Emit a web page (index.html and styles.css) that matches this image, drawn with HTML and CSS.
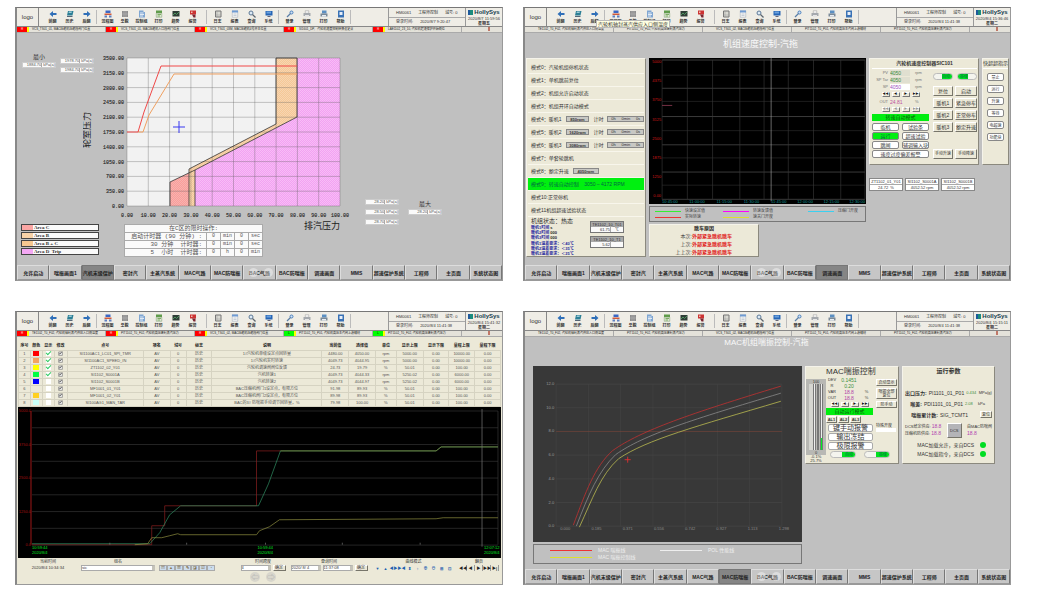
FILE: index.html
```
<!DOCTYPE html>
<html lang="zh-CN">
<head>
<meta charset="utf-8">
<title>HollySys 机组控制</title>
<link rel="stylesheet" href="styles.css">
</head>
<body>
<svg class="sprite" aria-hidden="true">
  <symbol id="i-left" viewBox="0 0 16 16"><path fill="#2f6fb8" d="M1 8l7-6v4h7v4H8v4z"/></symbol>
  <symbol id="i-right" viewBox="0 0 16 16"><path fill="#2f6fb8" d="M15 8L8 2v4H1v4h7v4z"/></symbol>
  <symbol id="i-disk" viewBox="0 0 16 16"><path fill="#2c7f96" d="M4 2h11l-2 9H2z"/><path fill="#9ccad6" d="M6 3h6l-1 3H5z"/><path fill="#567" d="M2 12h11v2H2z"/></symbol>
  <symbol id="i-flow" viewBox="0 0 16 16"><path fill="#3b67c4" d="M3 1h10v5H3z"/><path fill="#d05a3c" d="M1 7h14v3H1z"/><path fill="#5d7fc0" d="M1 11h5v4H1zM10 11h5v4h-5z"/></symbol>
  <symbol id="i-stop" viewBox="0 0 16 16"><path fill="#8e8e8e" d="M2 2h12v12H2z"/><path stroke="#bbb" d="M6 2v12M10 2v12M2 8h12"/></symbol>
  <symbol id="i-doc" viewBox="0 0 16 16"><path fill="#7fa6d2" d="M2 1h9v3h3v11H2z"/><path stroke="#fff" stroke-width="1.5" d="M4 6h7M4 9h8M4 12h6"/></symbol>
  <symbol id="i-sheet" viewBox="0 0 16 16"><path fill="#5f9c4a" d="M2 1h12v5H2z"/><path fill="#dfe8d6" stroke="#7a9a68" d="M2.500 6.500h11v8h-11z"/><path stroke="#7fae65" stroke-width="2" d="M5 9h7M5 12h5"/></symbol>
  <symbol id="i-trend" viewBox="0 0 16 16"><path fill="#2e3d36" d="M1 2h14v11H1z"/><path fill="none" stroke="#5ab06c" stroke-width="1.500" d="M2 10l4-4 3 3 5-5"/></symbol>
  <symbol id="i-alarm" viewBox="0 0 16 16"><path fill="#c33" d="M2 1h12v8H2z"/><path fill="#7a2630" d="M6 9h7v6H9z"/><path fill="#f0c0b0" d="M4 3h3v3H4z"/></symbol>
  <symbol id="i-log" viewBox="0 0 16 16"><path fill="#d9d9d2" stroke="#777" stroke-width="2" d="M3 2h11v12H3z"/><path stroke="#999" d="M3 10h11M6 2v12"/></symbol>
  <symbol id="i-report" viewBox="0 0 16 16"><path fill="#f4f4f4" stroke="#9aa6b4" d="M2.500 1.500h11v13h-11z"/><path fill="#6f9bd2" d="M2 1h12v4H2z"/><path stroke="#9ab" d="M5 8h6M5 11h6"/></symbol>
  <symbol id="i-find" viewBox="0 0 16 16"><circle cx="6" cy="6" r="4" fill="#dce9f4" stroke="#5c7896" stroke-width="2"/><path stroke="#5c6670" stroke-width="2.500" d="M9 9l6 6"/></symbol>
  <symbol id="i-screen" viewBox="0 0 16 16"><path fill="#2665b5" d="M1 2h14v9H1z"/><path fill="#6aa0dc" d="M3 3h9v4H3z"/><path fill="#667" d="M5 12h6v2H5z"/></symbol>
  <symbol id="i-key" viewBox="0 0 16 16"><circle cx="11" cy="5" r="3" fill="#cfe0f4" stroke="#4a80bd" stroke-width="2"/><path stroke="#5b7fa8" stroke-width="2.500" d="M9 7l-7 7"/></symbol>
  <symbol id="i-print" viewBox="0 0 16 16"><path fill="#f5f5f5" stroke="#999" d="M4.500 1.500h7v5h-7z"/><path fill="#a5a9ae" d="M1 6h14v6H1z"/><path fill="#e6e6e6" d="M4 10h8v4H4z"/></symbol>
  <symbol id="i-printer" viewBox="0 0 16 16"><path fill="#5b8fc2" d="M4 1h9v6H4z"/><path fill="#7a8a99" d="M1 7h14v6H1z"/><path fill="#e8eef4" d="M4 10h8v3H4z"/></symbol>
  <symbol id="i-help" viewBox="0 0 16 16"><path fill="#3a72b5" d="M2 1h12v14H2z"/><path fill="#e6eef8" d="M5 4h6v6H5z"/></symbol>
  <symbol id="i-edit" viewBox="0 0 16 16"><path fill="#eee" stroke="#777" stroke-width="2" d="M2 3h12v11H2z"/><path stroke="#444" stroke-width="2" d="M5 11l8-9M4 8h4"/></symbol>
</svg>

<main class="wall">
  <!-- 汽机末级保护 -->
  <section class="screen" data-screen="stage">
    <div class="stage">
      <div class="stage-min">
        <div class="min-one"><p class="cap">最小</p><p class="field">1884.70<i>kPa(a)</i></p></div>
        <div class="min-two"><p class="field">1978.70<i>kPa(a)</i></p><p class="field">1984.70<i>kPa(a)</i></p></div>
      </div>
      <svg class="stage-chart" viewBox="83 32 272 188" id="stageChart">
        <defs>
          <pattern id="hR" width="2" height="2" patternUnits="userSpaceOnUse"><path fill="#f6b4b0" d="M0 0h2v2H0z"/><path fill="#fb9c9a" d="M0 0h1v1H0zM1 1h1v1H1z"/></pattern>
          <pattern id="hO" width="2" height="2" patternUnits="userSpaceOnUse"><path fill="#f7d5b2" d="M0 0h2v2H0z"/><path fill="#f5c896" d="M0 0h1v1H0zM1 1h1v1H1z"/></pattern>
          <pattern id="hP" width="2" height="2" patternUnits="userSpaceOnUse"><path fill="#f8bcf6" d="M0 0h2v2H0z"/><path fill="#f2a2f2" d="M0 0h1v1H0zM1 1h1v1H1z"/></pattern>
        </defs>
        <path fill="#f2f2f2" d="M127 57h213v148H127z"/>
        <path fill="url(#hP)" d="M297 57H340V205H195V169L297 116z"/>
        <path fill="url(#hO)" d="M276 57H297V116L195 169V205H189V168L276 123z"/>
        <path fill="url(#hR)" d="M170 181L189 172V205H170z"/>
        <g id="stageGrid"></g>
        <path fill="none" stroke="#333" stroke-width=".8" d="M170 205V181L195 169V205M189 205V168L276 123V57H297V116L195 169"/>
        <path fill="none" stroke="#f0a060" d="M138 131H143L149 114L174 73H297"/>
        <path fill="none" stroke="#f04848" d="M127 131H138L144 111L161 65H297"/>
        <path stroke="#3838f0" d="M173 126h12M179 120v12"/>
        <text class="vtitle" transform="translate(90 147) rotate(-90)">轮室压力</text>
      </svg>
      <div class="stage-bottom">
        <ul class="areas">
          <li><b class="sw r"></b><span>Area C</span></li>
          <li><b class="sw o"></b><span>Area B</span></li>
          <li><b class="sw o2"></b><span>Area B + C</span></li>
          <li><b class="sw p"></b><span>Area D&nbsp; Trip</span></li>
        </ul>
        <table class="timer">
          <colgroup><col class="wide"><col><col><col><col></colgroup>
          <tr><th colspan="5">在C区的限时操作:</th></tr>
          <tr><td class="rt">启动计时器 (90 分钟) :</td><td>0</td><td>min</td><td>0</td><td>sec</td></tr>
          <tr><td class="rt">30 分钟 &nbsp;计时器:</td><td>0</td><td>min</td><td>0</td><td>sec</td></tr>
          <tr><td class="rt">5 &nbsp;小时 &nbsp;计时器:</td><td>0</td><td>h</td><td>0</td><td>min</td></tr>
        </table>
        <p class="xtitle">排汽压力</p>
      </div>
      <div class="stage-max">
        <div class="max-three"><p class="field">28.20<i>kPa(a)</i></p><p class="field">28.50<i>kPa(a)</i></p><p class="field">28.70<i>kPa(a)</i></p></div>
        <div class="max-one"><p class="cap">最大</p><p class="field">28.20<i>kPa(a)</i></p></div>
      </div>
    </div>
  </section>

  <!-- 机组速度控制 -->
  <section class="screen" data-screen="speed">
    <div class="speed">
      <h1 class="title">机组速度控制-汽拖</h1>
      <div class="speed-grid">
        <div class="modes">
          <ol class="mode-list" id="modeList"></ol>
          <div class="status">
            <div class="status-l">
              <p class="st">机组状态：热态</p>
              <p>暖机1时间 <em>s</em></p><p>暖机2时间 <em>000</em></p><p>暖机3时间 <em>000</em></p>
              <p class="up">暖机1温差要求：＜40℃</p><p>暖机2温差要求：＜35℃</p><p>暖机3温差要求：＜25℃</p>
            </div>
            <div class="status-r">
              <div class="tag"><b>TE1102_10_T01</b><span>61.75</span><span>℃</span></div>
              <div class="tag"><b>TE1102_10_T1</b><span>5.62</span><span></span></div>
            </div>
          </div>
        </div>
        <div class="speed-mid">
          <svg class="speed-chart" viewBox="649 59 215 145" id="speedChart"><path d="M649 59h215v145H649z"/></svg>
          <ul class="legend three">
            <li><b class="g"></b>快速设定值</li><li><b class="m"></b>转速反馈值</li><li><b class="c"></b>压缩门开度</li>
            <li><b class="rd"></b>实际转速</li><li><b class="y"></b>速关门开度</li>
          </ul>
          <table class="trip">
            <tr><th></th><th>跳车原因</th></tr>
            <tr><td>本次:</td><td class="hot">外部紧急跳机跳车</td></tr>
            <tr><td>上次:</td><td class="hot">外部紧急跳机跳车</td></tr>
            <tr><td>上上次:</td><td class="hot">外部紧急跳机跳车</td></tr>
          </table>
        </div>
        <div class="speed-right">
          <div class="speed-panels">
            <div class="sic">
              <h2>汽轮机速度控制器SIC101</h2>
              <div class="sic-l">
                <label>PV<input value="4050" readonly><span>rpm</span></label>
                <label>SP Tar<input value="4050" readonly><span>rpm</span></label>
                <label>SP<input class="w" value="4050"><span>rpm</span></label>
                <div class="steps"><button>◀◀</button><button>◀</button><button>▶</button><button>▶▶</button></div>
                <label>OUT<input class="pk" value="24.81" readonly><span>%</span></label>
                <div class="steps dim"><button>◀◀</button><button>◀</button><button>▶</button><button>▶▶</button></div>
                <p class="mode-bar">转速自动模式</p>
                <div class="pills"><button>临机</button><button>试验条</button><button class="on">运行</button><button>超速试验</button><button>跳闸</button><button>辅调输入块</button><button class="wide">速度过度偏差报警</button></div>
              </div>
              <div class="sic-r">
                <div class="toggles"><button class="tg">自动</button><button class="tg rev">串级</button></div>
                <div class="cmds"><button>复位</button><button>启动</button><button>暖机1</button><button>紧急停车</button><button>暖机2</button><button>正常停车</button><button>暖机3</button><button>额定升速</button></div>
                <div class="cmds"><button>手动升速</button><button>手动降速</button></div>
              </div>
            </div>
            <div class="picker"><h2>快超超指示</h2><button>禁止</button><button>运行</button><button>升速</button><button>等待</button><button>电超速</button><button>功能块</button></div>
          </div>
          <div class="tags">
            <div><b>ZT1102_01_Y01</b><span>24.72 &nbsp;%</span></div>
            <div><b>SI1102_S0001A</b><span>4052.52 rpm</span></div>
            <div><b>SI1102_S0001B</b><span>4052.52 rpm</span></div>
          </div>
        </div>
      </div>
    </div>
  </section>

  <!-- 趋势 -->
  <section class="screen" data-screen="trend">
    <div class="trend">
      <table class="points"><thead><tr id="pointHead"></tr></thead><tbody id="pointRows"></tbody></table>
      <svg class="trend-chart" viewBox="18 410 484 152" id="trendChart">
        <path d="M18 410h484v152H18z"/>
        <g id="trendGrid"></g>
        <path stroke="#a01818" d="M31 414V548"/>
        <g fill="none" stroke-width=".7">
          <path stroke="#8c2020" d="M32 548H152V529H165V509H257V454H281"/>
          <path stroke="#2f8f63" d="M32 547H150L160 536L170 518L181 509H259L269 487L281 454H437L442 450H499"/>
          <path stroke="#8f8f40" d="M135 548L148 547L152 541L162 541L170 539L178 537L181 538H257L260 534L270 530L280 523L437 522L444 521H499M281 454H437L442 450H499"/>
        </g>
        <path stroke="#777" stroke-width=".7" d="M483 412V550M110 546v2M187 546v2M266 546v2M343 546v2M421 546v2"/>
      </svg>
      <div class="trend-bar">
        <div class="tb"><span>当前时间</span><time>2020/8/4 10:34:34</time></div>
        <div class="tb"><label for="grp">组名</label><select id="grp"><option>sic</option></select></div>
        <div class="tb ic"><div class="mini" id="miniA"></div></div>
        <div class="tb"><label for="span">时间跨度</label><div class="row"><select id="span"><option>4</option></select><button>确定</button></div><div class="row rounds"><button>⇦</button><button>⇨</button></div></div>
        <div class="tb"><label for="qd">查询时间</label><div class="row"><select id="qd"><option>2020/ 8/ 4</option></select><select aria-label="时刻"><option>11:37:08</option></select><button>确定</button></div></div>
        <div class="tb"><span>曲线模式</span><div class="mini" id="miniB"></div></div>
        <div class="tb"><span>翻页</span><div class="mini pg"><button>◀◀</button><button>◀</button><button>▶</button><button>▶▶</button><button>▶|</button></div></div>
      </div>
    </div>
  </section>

  <!-- MAC 喘振控制 -->
  <section class="screen" data-screen="surge">
    <div class="surge">
      <h1 class="title">MAC机组喘振控制-汽拖</h1>
      <div class="surge-grid">
        <div class="surge-mid">
          <svg class="surge-chart" viewBox="533 366 267 175" id="surgeChart">
            <path fill="#383838" d="M533 366h267v175H533z"/>
            <g id="surgeGrid"></g>
            <g fill="none" stroke-width=".8">
              <path stroke="#c03030" d="M573 524C585 492 594 466 612 450C640 430 690 413 779 386"/>
              <path stroke="#888" d="M576 525C588 494 598 470 615 454C643 434 692 419 779 393"/>
              <path stroke="#b8b850" d="M579 526C592 498 600 474 618 458C646 439 695 426 779 401"/>
            </g>
            <path stroke="#f03030" stroke-width=".8" d="M624 459h6M627 456v6"/>
          </svg>
          <ul class="legend two">
            <li><b class="rd"></b>MAC 喘振线</li><li><b class="w"></b>POL 性能线</li>
            <li><b class="y"></b>MAC 喘振控制线</li>
          </ul>
        </div>
        <div class="mac">
          <div class="gauge"><span>100</span><div class="bars"><i></i><i class="f1"></i><i class="f2"></i></div><span>0</span><span>-0.1%<br>25.7%</span></div>
          <div class="mac-c">
            <h2>MAC喘振控制</h2>
            <dl class="vals"><dt>DEV</dt><dd class="gr">0.1451</dd><dd></dd><dt>R</dt><dd class="gr">0.20</dd><dd></dd><dt>VAR</dt><dd>18.8</dd><dd class="u">%</dd><dt>OUT</dt><dd>18.8</dd><dd class="u">%</dd></dl>
            <div class="steps"><button>◀◀</button><button>◀</button><button>▶</button><button>▶▶</button></div>
            <p class="mode-bar">自动运行模式</p>
            <div class="al"><button>AL1</button><button>AL2</button><button>AL3</button></div>
            <div class="alarms-btn"><button>键手动报警</button><button>输出冻结</button><button>极限报警</button></div>
            <div class="toggles"><button class="tg">自动</button><button class="tg">串级</button></div>
          </div>
          <div class="mac-r"><button>启动显示</button><button class="tall">喘振全部<br>复位</button><button>防手动</button><label>特殊开度<input value=""></label></div>
        </div>
        <div class="params">
          <h2>运行参数</h2>
          <p><b>出口压力:</b> PI1101_01_P01<em>0.434</em><span>MPa(g)</span></p>
          <p><b>喉差:</b> PDI1101_01_P01<em>2.08</em><span>kPa</span></p>
          <p><b>喘振累计数:</b> SIG_TCMT1<button>复位</button></p>
          <div class="dcs"><div><p>DCS给定供应: <em>18.8</em></p><p>压缩机防供应: <em>18.8</em></p></div><button>DCS</button><div><p>由MAC防喘阀</p><p><em>18.8</em></p></div></div>
          <p class="lamp">MAC加载允许，来自DCS<i></i></p>
          <p class="lamp">MAC加载指令，来自DCS<i></i></p>
        </div>
      </div>
    </div>
  </section>
</main>
<script src="script.js"></script>
</body>
</html>
```
FILE: styles.css
```
* { box-sizing: border-box; margin: 0; padding: 0; }
body { background: #fff; color: #333; font: 5px/6px "Liberation Sans", "Noto Sans CJK SC", sans-serif; }
button, input, select { font: inherit; color: inherit; border: 0; background: none; min-width: 0; white-space: nowrap; }
select { appearance: none; }
ul, ol { list-style: none; }
i, em { font-style: normal; }
table { border-collapse: collapse; }
svg { display: block; }
.sprite { position: absolute; width: 0; height: 0; }

.wall { display: grid; grid-template-columns: 1fr 1fr; align-items: start; gap: 30px 20px; padding: 7px 27px 0 15px; }
.screen { display: flex; flex-direction: column; min-height: 274px; background: #c0c0c0; border: 1px solid #999; border-top-color: #777; border-left: 2px solid #888; min-width: 0; }
.screen > :nth-child(3) { flex: 1 0 auto; }

/* toolbar */
.toolbar { position: relative; display: flex; height: 18px; background: #efede6; }
.logo { width: 22px; border-right: 1px solid #888; display: grid; place-items: center; font-size: 6px; margin-right: 5px; }
.tools { display: flex; border-right: 1px solid #bbb; margin: 2px 2px 2px 0; padding-right: 1px; }
.tools.gap { padding-right: 5px; }
.tools button { width: 17px; display: flex; flex-direction: column; align-items: center; font-size: 4px; line-height: 5px; font-weight: bold; }
.tools svg { width: 8px; height: 8px; margin-bottom: 1px; }
.info { margin-left: auto; width: 78px; border-left: 1px solid #999; border-right: 1px solid #999; display: grid; grid-template-rows: 1fr 1fr; font-size: 4px; }
.info p { display: flex; align-items: center; gap: 7px; padding-left: 7px; white-space: nowrap; }
.info p + p { border-top: 1px solid #aaa; }
.brand { width: 36px; text-align: center; font-size: 4px; line-height: 5px; white-space: nowrap; padding-top: 1px; }
.brand b { display: flex; align-items: center; justify-content: center; gap: 1px; font-size: 6px; line-height: 7px; color: #123c4c; }
.brand b i { width: 5px; height: 5px; background: #1b8c7e; border-left: 2px solid #1f5a9a; }
.brand time, .brand strong { display: block; }
.tip { position: absolute; left: 71px; top: 12px; background: #ffffe1; border: 1px solid #bbb; padding: 0 1px; line-height: 6px; font-size: 5px; }

.ticker { display: grid; grid-template-columns: repeat(5, 89px) 1fr; height: 7px; background: #e4e2da; border-top: 1px solid #888; border-bottom: 1px solid #aaa; font-size: 3px; line-height: 5px; }
.ticker div { display: flex; gap: 3px; white-space: nowrap; border-right: 1px solid #aaa; color: #222; }
.ticker b { flex: none; width: 12px; border-right: 2px solid #ff0; background: #f00; color: #ffb0b0; text-align: center; }
.ticker b.gn { background: #0f0; color: #080; }
.ticker .plain { padding-left: 13px; }
.ticker .bell { border: 0; justify-content: center; }
.bell::after { content: ""; width: 2px; height: 4px; margin-left: 14px; background: #c07868; }

.nav { display: grid; grid-template-columns: repeat(15, 1fr); height: 15px; }
.nav button { position: relative; background: #c6c6c6; border: 1px solid; border-color: #ddd #777 #999 #ddd; font-weight: bold; color: #222; }
.nav button.cur { background: #858585; border-color: #777; }
.nav .rings::before, .nav .rings::after { content: ""; position: absolute; top: 2px; left: 5px; width: 9px; height: 9px; border-radius: 50%; background: #fff6; }
.nav .rings::after { left: 20px; }

.title { font-size: 9px; line-height: 10px; font-weight: normal; color: #fafafa; text-align: center; padding-right: 14px; }

/* final stage protection */
.stage { display: grid; grid-template-columns: 66px 272px 1fr; grid-template-rows: auto auto; align-content: start; }
.stage-min { display: flex; gap: 4px; padding: 20px 0 0 5px; }
.min-one, .min-two { width: 34px; flex: none; }
.min-two { padding-top: 5px; display: flex; flex-direction: column; gap: 3px; position: relative; z-index: 1; }
.cap { font-size: 6px; line-height: 9px; text-align: center; }
.field { display: flex; justify-content: flex-end; background: #fafafa; border: 1px solid #ccc; font-size: 4px; line-height: 4px; color: #555; white-space: nowrap; }
.field i { border-left: 1px solid #aaa; padding-left: 1px; }
.stage-chart { width: 100%; }
.stage-chart text { font: 5px "Liberation Mono", monospace; fill: #222; stroke: #222; stroke-width: .1; }
.stage-chart .vtitle { font: 9px "Noto Sans CJK SC", sans-serif; stroke: none; }
.stage-bottom { grid-column: 1 / 3; grid-row: 2; display: flex; align-items: flex-start; padding: 3px 0 0 4px; }
.areas { width: 78px; display: grid; gap: 1px; flex: none; }
.areas li { display: flex; height: 7px; background: #fafafa; border: 1px solid #444; gap: 1px; font-size: 5px; line-height: 5px; font-weight: bold; font-family: "Liberation Serif", serif; }
.sw { width: 11px; }
.sw.r { background: #fba6a4; } .sw.o { background: #f7d2a8; } .sw.o2 { background: #f6c890; } .sw.p { background: #f4a8f4; }
.timer { width: 139px; flex: none; margin-left: 25px; background: #fafafa; font: 6px/7px "Liberation Mono", "Noto Sans CJK SC", monospace; color: #555; table-layout: fixed; }
.timer .wide { width: 82px; }
.timer th, .timer td { border: 1px solid #aaa; font-weight: normal; text-align: center; height: 8px; white-space: nowrap; }
.timer td { font-size: 5px; }
.timer .rt { text-align: right; font-size: 6px; padding-right: 4px; }
.xtitle { font-size: 9px; line-height: 9px; margin: -2px 0 0 41px; white-space: nowrap; color: #222; }
.stage-max { grid-column: 3; grid-row: 1 / 3; display: flex; align-items: flex-start; gap: 9px; padding: 166px 0 0 10px; }
.stage-max > div { width: 34px; display: flex; flex-direction: column; }
.max-three { gap: 4px; }
.max-one .cap { line-height: 10px; }

/* shared control parts */
.modes, .sic, .picker, .mac, .params, .trip { background: #ece9d8; border: 1px solid; border-color: #f5f3ea #8b897e #8b897e #f5f3ea; }
.steps { display: flex; gap: 2px; justify-content: center; }
.steps button { width: 8px; height: 5px; font-size: 3px; line-height: 3px; border: 1px solid; border-color: #fff #777 #777 #fff; color: #111; }
.steps.dim button { color: #999; }
.mode-bar { background: #00ee10; color: #086008; text-align: center; line-height: 7px; }
.toggles { display: flex; justify-content: space-between; gap: 4px; }
.tg { width: 20px; height: 7px; border-radius: 4px; background: linear-gradient(90deg, #f4f4ee 45%, #00e020 45%); color: #064; font-size: 4px; line-height: 5px; text-align: right; border: 1px solid #bbb; padding-right: 2px; }
.tg.rev { background: linear-gradient(270deg, #f4f4ee 45%, #00e020 45%); text-align: left; padding-left: 2px; }

.legend { display: grid; border: 1px solid #777; font-size: 4px; line-height: 6px; color: #444; margin-top: 2px; }
.legend li { display: flex; align-items: center; gap: 4px; white-space: nowrap; }
.legend b { width: 26px; height: 1px; }
.legend .g { background: #3e3; } .legend .m { background: #f0f; } .legend .c { background: #3bd0f0; } .legend .rd { background: #e33; } .legend .y { background: #dde030; } .legend .w { background: #eee; }
.legend.three { grid-template-columns: 68px 85px 1fr; padding: 1px 5px; }
.legend.two { grid-template-columns: 110px 1fr; padding: 2px 16px; }
.legend.two b { width: 42px; }
.legend.two li { color: #eee; line-height: 7px; gap: 6px; font-size: 5px; }

/* speed control */
.speed { padding-top: 6px; }
.speed-grid { display: grid; align-items: start; grid-template-columns: 120px 217px 1fr; gap: 0 3px; padding: 9px 3px 6px 1px; }
.modes { padding: 2px 1px 0; }
.mode-list li { display: flex; align-items: center; gap: 4px; height: 13px; padding-left: 3px; border-bottom: 1px solid #f8f6ec; white-space: nowrap; }
.mode-list .cur { background: #00f010; color: #064; }
.mode-list input { width: 26px; height: 6px; background: #c8c8c4; border: 1px solid #888; text-align: center; font-weight: bold; font-size: 4px; line-height: 4px; }
.mode-list .tm { display: flex; width: 40px; background: #c8c8c4; border: 1px solid #888; font-size: 4px; line-height: 4px; justify-content: space-around; }
.status { display: flex; justify-content: space-between; padding: 0 20px 0 3px; }
.status-l { font-size: 4px; line-height: 5px; font-weight: bold; color: #2a2aa0; white-space: nowrap; }
.status-l em { color: #222; }
.status-l .st { font-size: 6px; line-height: 8px; color: #333; font-weight: normal; }
.status-l .up { margin-top: 1px; }
.status-r { width: 34px; display: flex; flex-direction: column; gap: 3px; padding-top: 4px; }
.tag { display: grid; grid-template-columns: 19px 1fr; border: 1px solid #777; background: #fafafa; font-size: 4px; line-height: 5px; text-align: right; }
.tag b { grid-column: 1 / 3; background: #a8a8a8; text-align: center; font-weight: normal; white-space: nowrap; }
.tag span + span { border-left: 1px solid #aaa; text-align: center; }
.speed-mid, .speed-right { min-width: 0; }
.speed-chart, .surge-chart, .trend-chart { width: 100%; }
.speed-chart text, .trend-chart text, .surge-chart text { font: 4px "Liberation Sans", sans-serif; }
.trip { width: 110px; margin-top: 2px; line-height: 7px; color: #444; border-collapse: separate; border-spacing: 0; }
.trip th { text-align: left; padding-left: 2px; color: #222; }
.trip td { text-align: right; height: 8px; }
.trip .hot { color: #e02020; font-weight: bold; text-align: left; width: 66px; }
.speed-panels { display: flex; gap: 3px; height: 107px; }
.sic { flex: 1; display: grid; grid-template-columns: 57px 1fr; grid-template-rows: auto 1fr; column-gap: 4px; padding: 0 1px 1px 2px; }
.sic h2 { grid-column: 1 / 3; }
.sic h2, .picker h2 { font-size: 5px; line-height: 9px; text-align: center; white-space: nowrap; border-bottom: 1px solid #fff; }
.sic-l { display: flex; flex-direction: column; gap: 1px; padding-top: 1px; }
.sic-l label { display: grid; grid-template-columns: 16px 20px 1fr; gap: 2px; text-align: right; font-size: 4px; line-height: 6px; color: #777; white-space: nowrap; }
.sic-l label span { text-align: left; padding-left: 3px; }
.sic-l input { width: 20px; height: 6px; color: #3a8a3a; background: #e0dfd0; font-size: 5px; }
.sic-l input.w { background: #fff; color: #a050c0; }
.sic-l input.pk { color: #c050a0; background: none; }
.sic-l .steps { padding: 1px 0; }
.pills { display: grid; grid-template-columns: 1fr 1fr; gap: 1px 3px; padding-top: 1px; }
.pills button, .picker button, .alarms-btn button { background: #fff; border: 1px solid #888; border-radius: 2px; line-height: 5px; height: 8px; }
.pills .on { background: #00ee10; color: #064; }
.pills .wide { grid-column: 1 / 3; }
.sic-r { display: flex; flex-direction: column; gap: 6px; padding-top: 4px; }
.cmds { display: grid; grid-template-columns: 20px 1fr; gap: 2px; }
.cmds button, .mac-r button, .al button, .params button { border: 1px solid; border-color: #fff #77756a #77756a #fff; height: 10px; }
.cmds + .cmds { margin-top: auto; padding-bottom: 4px; }
.cmds + .cmds button { font-size: 4px; }
.picker { width: 28px; display: flex; flex-direction: column; gap: 4px; padding: 0 4px; }
.picker h2 { font-size: 5px; font-weight: normal; margin: 0 -4px; }
.picker button { font-size: 4px; }
.tags { display: flex; gap: 2px; margin-top: 13px; }
.tags div { width: 34px; background: #fff; border: 1px solid #888; font-size: 4px; line-height: 5px; text-align: center; white-space: nowrap; }
.tags b { display: block; font-weight: normal; border-bottom: 1px solid #aaa; }

/* trend */
.trend { display: flex; flex-direction: column; background: #ece9d8; padding: 4px 1px 0 1px; }
.points { width: 100%; table-layout: fixed; font-size: 4px; line-height: 5px; text-align: center; color: #555; }
.points th { height: 9px; color: #222; white-space: nowrap; }
.points td { height: 7px; border: 1px solid #d6d3c2; white-space: nowrap; }
.points .chip { display: block; width: 6px; height: 5px; margin: auto; }
.points input { appearance: none; display: block; width: 5px; height: 5px; margin: auto; background: #fff; }
.points input:checked::after { content: ""; display: block; width: 4px; height: 2px; border: solid #3c6; border-width: 0 0 1px 1px; transform: rotate(-45deg); }
.points svg { width: 5px; height: 5px; margin: auto; }
.trend-bar { flex: 1; display: grid; grid-template-columns: 60px 80px 80px 50px 82px 87px 1fr; font-size: 4px; line-height: 5px; padding-top: 1px; }
.tb { display: flex; flex-direction: column; align-items: center; gap: 1px; white-space: nowrap; min-width: 0; }
.tb.ic { padding: 6px 22px 0 0; }
.tb select { height: 6px; width: 30px; background: #fff; border: 1px solid #aaa; border-right: 3px solid #c4c2b8; line-height: 4px; }
.tb > select { width: 74px; }
.row { display: flex; gap: 2px; }
.row button { width: 13px; height: 6px; border: 1px solid; border-color: #fff #77756a #77756a #fff; line-height: 4px; }
.row.rounds { gap: 6px; }
.row.rounds button { width: 10px; height: 10px; border-radius: 50%; background: #d8d6cc; color: #aaa; border: 0; font-size: 8px; line-height: 9px; }
.mini { display: flex; }
.mini button { width: 8px; height: 6px; font-size: 4px; line-height: 5px; color: #2060b0; font-weight: bold; }
.mini.pg button { color: #222; border-right: 1px solid #999; }
.mini button.s { border: 1px solid #aaa; background: #cde; color: #875; line-height: 4px; }

/* surge */
.surge { padding-top: 1px; }
.surge .title { font-size: 8px; padding-right: 2px; }
.surge-grid { display: grid; grid-template-columns: 269px 94px 93px; align-items: start; gap: 0 3px; padding: 18px 0 0 8px; }
.surge-mid { min-width: 0; }
.mac { display: grid; grid-template-columns: 20px 47px 1fr; height: 98px; }
.gauge { background: #b8b8b4; margin-top: 12px; text-align: center; font-size: 4px; line-height: 5px; display: flex; flex-direction: column; }
.gauge span:last-child { background: #ece9d8; line-height: 4px; }
.bars { flex: 1; display: flex; gap: 1px; justify-content: flex-end; padding-right: 3px; border-left: 4px solid #d5d5d0; margin-left: 3px; }
.bars i { width: 3px; background: #eee; border: 1px solid #777; border-width: 0 1px; }
.bars .f1 { background: linear-gradient(#eee 65%, #0e2 65%); } .bars .f2 { background: linear-gradient(#eee 82%, #0e2 82%); }
.mac-c { display: flex; flex-direction: column; gap: 1px; }
.mac-c h2 { font-size: 8px; line-height: 9px; font-weight: normal; white-space: nowrap; }
.vals { display: grid; grid-template-columns: 12px 22px 1fr; line-height: 6px; text-align: center; font-size: 5px; }
.vals dt { font-size: 4px; }
.vals dd { color: #b040a8; } .vals .gr { color: #3c9040; } .vals .u { color: #444; font-size: 4px; }
.al { display: flex; gap: 1px; }
.al button { width: 11px; height: 7px; line-height: 5px; font-weight: bold; font-size: 4px; }
.alarms-btn { display: grid; gap: 1px; padding-left: 2px; font-size: 7px; }
.alarms-btn button { height: 8px; line-height: 6px; border-color: #aaa; }
.mac-c .toggles { width: 64px; padding-left: 4px; }
.mac-c .tg { width: 26px; }
.mac-r { display: flex; flex-direction: column; gap: 2px; padding: 12px 1px 0 3px; font-size: 4px; line-height: 5px; }
.mac-r button { height: 7px; line-height: 5px; }
.mac-r .tall { height: 11px; line-height: 4px; }
.mac-r label { padding-top: 13px; }
.mac-r input { display: block; width: 20px; height: 4px; background: #fff; }
.params { height: 98px; display: flex; flex-direction: column; padding: 0 2px; white-space: nowrap; }
.params h2 { font-size: 6px; line-height: 8px; text-align: center; margin-bottom: 12px; }
.params > p { display: flex; justify-content: flex-end; gap: 2px; align-items: center; height: 11px; font-size: 5px; }
.params > p span { width: 14px; font-size: 4px; }
.params em { color: #b040b0; }
.params > p em { color: #3c9040; font-size: 4px; width: 11px; }
.params button { height: 7px; width: 12px; line-height: 5px; font-size: 4px; margin-left: 10px; }
.dcs { display: flex; align-items: center; justify-content: space-between; font-size: 4px; height: 20px; }
.dcs em { font-size: 5px; }
.dcs button { width: 15px; height: 15px; background: #b4b4b8; margin: 0; }
.params .lamp { height: 9px; padding-right: 6px; gap: 6px; }
.lamp i { width: 6px; height: 6px; border-radius: 50%; background: #0d2; }
```
FILE: script.js
```
const NS = 'http://www.w3.org/2000/svg';
const el = (html) => { const t = document.createElement('template'); t.innerHTML = html.trim(); return t.content.firstElementChild; };

const toolGroups = [
  [['left', '前翻'], ['disk', '历史'], ['right', '后翻']],
  [['flow', '流程图'], ['stop', '总貌'], ['doc', '控制组'], ['sheet', '打印'], ['trend', '趋势'], ['alarm', '报警']],
  [['log', '日志'], ['report', '报表'], ['find', '查询'], ['screen', '系统']],
  [['key', '登录'], ['print', '管理'], ['printer', '打印'], ['help', '帮助']]
];
const navItems = ['允许启动', '喘振画面1', '汽机末级保护', '密封汽', '主蒸汽系统', 'MAC气路', 'MAC防喘振', 'BAC气路', 'BAC防喘振', '调速画面', 'MMS', '超速保护系统', '工程师', '主页面', '系统状态图'];

const T = {
  inlet: 'TE1102_T0_F02, 汽轮机轴封蒸汽供应入口侧温度',
  supply: 'PIT1102_T0_F02, 汽轮机高压密封蒸汽压力',
  seal: 'VCS_TS01_02, MAC压缩机压缩段阀门位置',
  reg: 'PIT1102_T0_P01, 汽轮机高压主汽阀上游辅材'
};
const screens = {
  stage: { current: 2, time: '2020/8/7 11:59:56', login: '2020/8/7 9:20:47', day: '星期五', red: 5,
    ticker: ['VCS_TS01_01, MAC压缩机压缩段阀门位置', 'VCS_TS01_01, MAC压缩机入口段阀门位置', 'VCS_TS01_03M, MAC压缩机4号开主位置', 'SI1601_DP, &nbsp; 汽轮机速度控制转换设定点', 'LAE1102_23_10, 汽轮机超速保护开始倒位'] },
  speed: { current: 9, time: '2020/8/4 15:36:46', login: '2020/8/4 11:41:38', day: '星期二', tip: '汽轮机轴封蒸汽供应入口侧温度',
    ticker: [T.inlet, T.supply, T.seal, T.reg, T.supply] },
  trend: { time: '2020/8/4 15:41:32', login: '2020/8/4 11:41:38', day: '星期二', red: 3,
    ticker: [T.inlet, T.supply, T.seal, T.reg, T.supply] },
  surge: { current: 6, time: '2020/8/4 15:15:11', login: '2020/8/4 11:41:38', day: '星期二',
    ticker: [T.inlet, T.supply, T.seal, T.reg, T.supply] }
};

document.querySelectorAll('.screen').forEach((node) => {
  const s = screens[node.dataset.screen];
  const tools = toolGroups.map((g, i) => `<div class="tools ${i === 1 ? 'gap' : ''}">` +
    g.map(([icon, label]) => `<button><svg><use href="#i-${icon}"/></svg>${label}</button>`).join('') + '</div>').join('');
  const ticker = s.ticker.map((text, i) => s.red
    ? `<div><b class="${i < s.red ? '' : 'gn'}">${i < s.red ? 'H' : 'L'}</b>${text}</div>`
    : `<div class="plain">${text}</div>`).join('');
  node.prepend(
    el(`<header class="toolbar"><div class="logo">logo</div>${tools}
      <div class="info"><p><span>HM0061</span><span>工程师控制</span><span>域号: 0</span></p><p><span>登录时间:</span><span>${s.login}</span></p></div>
      <div class="brand"><b><i></i>HollySys</b><time>${s.time}</time><strong>${s.day}</strong></div>
      ${s.tip ? `<div class="tip">${s.tip}</div>` : ''}</header>`),
    el(`<div class="ticker">${ticker}<div class="bell"></div></div>`)
  );
  if (node.dataset.screen !== 'trend') {
    node.append(el('<nav class="nav">' + navItems.map((n, i) =>
      `<button class="${i === s.current ? 'cur' : ''} ${i === 7 ? 'rings' : ''}">${n}</button>`).join('') + '</nav>'));
  }
});

function line(g, d, stroke, width = 0.6) {
  const p = document.createElementNS(NS, 'path');
  p.setAttribute('d', d); p.setAttribute('stroke', stroke); p.setAttribute('stroke-width', width); p.setAttribute('fill', 'none');
  g.append(p);
}
function label(g, x, y, text, fill, anchor = 'start') {
  const t = document.createElementNS(NS, 'text');
  t.setAttribute('x', x); t.setAttribute('y', y); t.setAttribute('text-anchor', anchor);
  if (fill) t.style.fill = fill;
  t.textContent = text; g.append(t);
}
const byId = (id) => document.getElementById(id);

const sg = byId('stageGrid');
for (let i = 0; i <= 10; i++) {
  const x = 127 + i * 21.3, y = 205 - i * 14.8;
  line(sg, `M${x} 57V205`, '#5558');
  line(sg, `M127 ${y}H340`, '#5558');
  label(sg, 124, y + 2, (i * 350).toFixed(2), null, 'end');
  label(sg, x, 216, (i * 10).toFixed(2), null, 'middle');
}

const modes = ['模式0：汽轮机组停机状态', '模式1：单机跳前复位', '模式2：机组允许启动状态', '模式3：机组开环自动模式', '模式4：暖机1', '模式5：暖机2', '模式6：暖机3', '模式7：单套轮跳机', '模式8：额定升速', '模式9：转速自动控制 &nbsp; &nbsp;3050 – 4172 RPM', '模式10:正常停机', '模式11机组超速试验状态'];
const speeds = { 4: '850rpm', 5: '1620rpm', 6: '3080rpm', 8: '4050rpm' };
modes.forEach((m, i) => {
  let html = m;
  if (speeds[i]) html += `<input aria-label="转速" value="${speeds[i]}" readonly>`;
  if (i > 3 && i < 7) html += '计时<span class="tm"><span>0h</span><span>0min</span><span>0s</span></span>';
  byId('modeList').append(el(`<li class="${i === 9 ? 'cur' : ''}">${html}</li>`));
});

const sc = byId('speedChart');
[61, 76, 89, 102, 117, 131, 145, 158, 172, 185, 199].forEach((y, i) => line(sc, `M662 ${y}H863`, i % 2 ? '#303030' : '#606060'));
[662, 687, 712, 739, 763, 787, 812, 839, 863].forEach((x) => line(sc, `M${x} 61V199`, '#3a3a3a'));
line(sc, 'M770 59V201', '#aaa');
line(sc, 'M662 106H672', '#c05070');
['5000', '4375', '3750', '3125', '2500', '1875', '1250', '0.00'].forEach((t, i) => label(sc, 661, 64 + i * 19, t, '#d01818', 'end'));
['10:45:00', '11:00:00', '11:15:00', '11:30:00'].forEach((t, i) => label(sc, 662 + i * 27, 203, t, '#1a9a9a'));
['11:45:00', '12:00:00', '12:15:00'].forEach((t, i) => label(sc, 770 + i * 26, 203, t, '#1a9a9a'));
label(sc, 863, 203, '12:30:00', '#1a9a9a', 'end');

const cols = [['序号', 12], ['颜色', 12], ['显示', 12], ['修改', 13], ['点号', 77], ['项名', 27], ['域号', 16], ['标志', 26], ['说明', 111], ['当前值', 27], ['选择值', 27], ['单位', 21], ['显示上限', 27], ['显示下限', 26], ['量程上限', 26], ['量程下限', 26]];
cols.forEach(([n, w]) => { const c = document.createElement('th'); c.textContent = n; c.style.width = (w / 4.86) + '%'; byId('pointHead').append(c); });
const pts = [
  ['#f00', 1, 'SI1100AC1_LC01_SPI_TMR', '1#汽轮机单级设定点回转量', '4480.00', '4050.00', 'rpm', '5000.00', '10000.00'],
  ['#f4a460', 1, 'SI1100AC1_SPEED_IN', '1#汽轮机实时转速', '4049.73', '4044.95', 'rpm', '5000.00', '10000.00'],
  ['#ff0', 1, 'ZT1102_02_Y01', '汽轮机调速阀阀位反馈', '24.73', '19.79', '%', '50.01', '100.00'],
  ['#0f4', 1, 'SI1102_S0001A', '汽机转速1', '4049.73', '4044.33', 'rpm', '5250.02', '6000.00'],
  ['#00f', 0, 'SI1102_S0001B', '汽机转速2', '4049.73', '4044.97', 'rpm', '5250.02', '6000.00'],
  ['#ece9d8', 0, 'MF1001_01_Y01', 'BAC压缩机阀门1设定点，有限方位', '91.98', '89.93', '%', '50.01', '100.00'],
  ['#ffd020', 0, 'MF1001_02_Y01', 'BAC压缩机阀门2设定点，有限方位', '89.98', '89.93', '%', '50.01', '100.00'],
  ['#c8fff8', 0, 'SI100AG1_MAN_TAR', 'BAC的3# 防喘振手动调节回转量，%', '79.98', '100.00', '%', '50.01', '100.00']
];
byId('pointRows').innerHTML = pts.map((p, i) => `<tr><td>${i + 1}</td><td><i class="chip" style="background:${p[0]}"></i></td><td><input type="checkbox" aria-label="显示 ${i + 1}" ${p[1] ? 'checked' : ''}></td><td><svg><use href="#i-edit"/></svg></td><td>${p[2]}</td><td>AV</td><td>0</td><td>历史</td><td>${p[3]}</td><td>${p[4]}</td><td>${p[5]}</td><td>${p[6]}</td><td>${p[7]}</td><td>0.00</td><td>${p[8]}</td><td>0.00</td></tr>`).join('');

const tg = byId('trendGrid');
for (let i = 0; i <= 8; i++) {
  const y = 414 + i * 16.8;
  line(tg, `M32 ${y}H499`, '#3c3c3c');
  if (i % 2 === 0) label(tg, 31, y + 1, (5000 - i * 625).toFixed(1), '#a01010', 'end');
}
line(tg, 'M499 414V548', '#3c3c3c');
[[32, '10:59:44'], [258, '10:59:44'], [485, '12:07:12']].forEach(([x, t]) => { label(tg, x, 552, t, '#00e020'); label(tg, x, 557, '2020/8/4', '#00e020'); });

byId('miniA').innerHTML = ['▤', '▲', '▦', '✎', '◪', '▧', '◔'].map((c) => `<button class="s">${c}</button>`).join('');
byId('miniB').innerHTML = ['▼', '▲', '◀▶', '▶◀', '⬍', '↕', '⊕', '⊖', '⊞', '⊡'].map((c) => `<button>${c}</button>`).join('');

const ug = byId('surgeGrid');
for (let i = 0; i < 8; i++) {
  line(ug, `M${556 + i * 32} 384V525`, '#444');
  label(ug, 565 + i * 31, 529, (i * 0.371 / 2).toFixed(3), '#888', 'middle');
}
for (let i = 0; i < 7; i++) {
  line(ug, `M556 ${384 + i * 23.500}H780`, i === 2 ? '#7a4638' : '#484848');
  label(ug, 554, 385 + i * 23.500, (12 - i * 2).toFixed(1), '#999', 'end');
}
```
